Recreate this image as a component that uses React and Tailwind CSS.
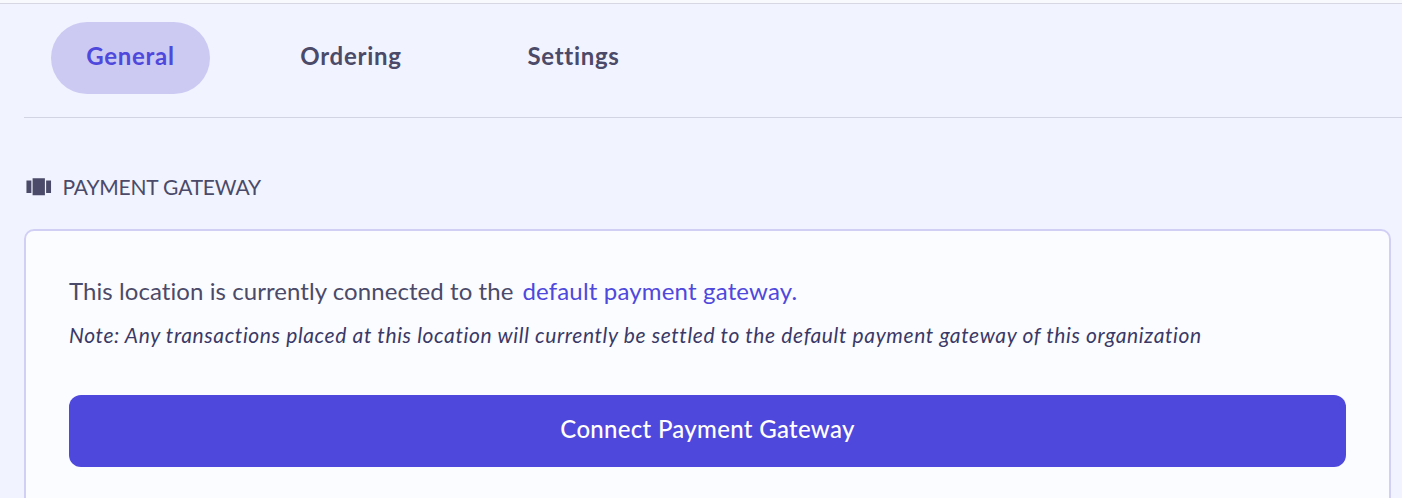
import { MdViewCarousel } from 'react-icons/md'

const TABS = [
  { label: 'General', className: 'w-[159px] bg-[#cccaf3] text-[#4f48dc] tracking-[0.7px]' },
  { label: 'Ordering', className: 'w-[174px] ml-[54px] text-[#4b4a68] tracking-[0.75px]' },
  { label: 'Settings', className: 'w-[163px] ml-[54px] text-[#4b4a68] tracking-[0.7px]' },
]

function Tabs() {
  return (
    <nav className="ml-6 flex h-[114px] border-b border-[#d2d3e3] pt-[18px] pl-[27px]">
      {TABS.map((tab) => (
        <button
          key={tab.label}
          type="button"
          className={`h-[71.5px] rounded-full pb-[4px] text-[24px] font-bold ${tab.className}`}
        >
          {tab.label}
        </button>
      ))}
    </nav>
  )
}

function PaymentGateway() {
  return (
    <section className="pr-[11px] pl-6">
      <h2 className="mt-[54px] flex h-[30px] items-center text-[#4b4a68]">
        <MdViewCarousel size={29.5} className="shrink-0" />
        <span className="ml-[9px] text-[21px] leading-[30px] tracking-[-0.2px] whitespace-nowrap">PAYMENT GATEWAY</span>
      </h2>

      <div className="mt-[27px] h-[320px] rounded-[10px] border-2 border-[#d2cff5] bg-[#fbfcff] px-[43px] pt-[42px]">
        <p className="flex h-9 items-center text-[24px] whitespace-nowrap text-[#4b4a68]">
          <span className="tracking-[0.07px]">This location is currently connected to the</span>
          <a href="#" className="ml-[9px] tracking-[0.17px] text-[#4f48dc]">default payment gateway.</a>
        </p>
        <p className="mt-[11px] flex h-[30px] items-center text-[21px] tracking-[0.625px] whitespace-nowrap text-[#3a3966] italic">
          Note: Any transactions placed at this location will currently be settled to the default payment gateway of this organization
        </p>
        <button
          type="button"
          className="mt-[45px] h-[71.5px] w-full rounded-xl bg-[#4f48dc] pb-[4px] text-[24px] font-medium tracking-[0.3px] text-white"
        >
          Connect Payment Gateway
        </button>
      </div>
    </section>
  )
}

export default function App() {
  return (
    <div className="h-[498px] overflow-hidden border-t-3 border-[#f8f9fd] bg-[#f1f3ff] font-['Lato',sans-serif]">
      <div className="border-t border-[#d6d7e3]">
        <Tabs />
        <PaymentGateway />
      </div>
    </div>
  )
}
